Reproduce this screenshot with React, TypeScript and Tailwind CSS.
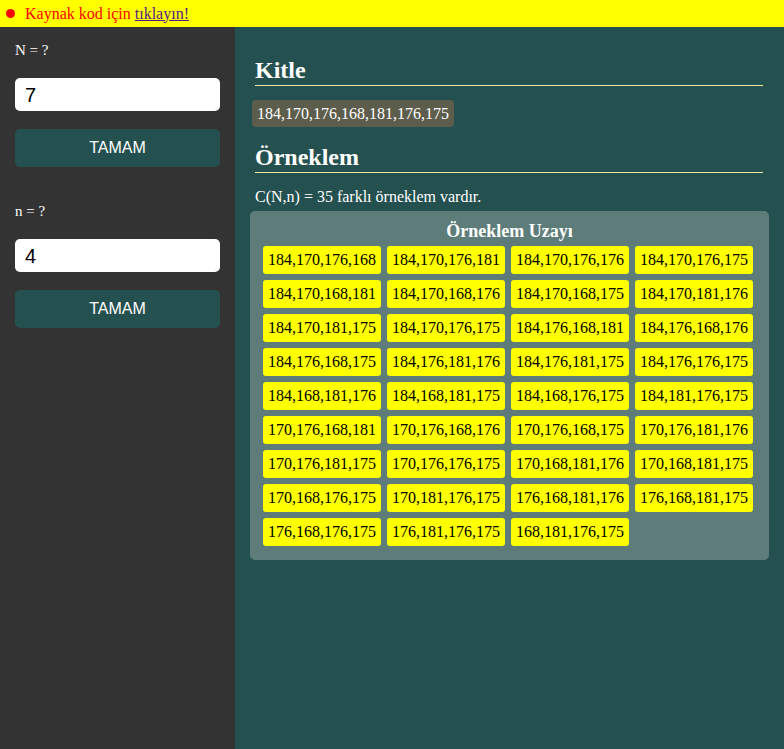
import React from "react";

const combos = [
  "184,170,176,168","184,170,176,181","184,170,176,176","184,170,176,175",
  "184,170,168,181","184,170,168,176","184,170,168,175","184,170,181,176",
  "184,170,181,175","184,170,176,175","184,176,168,181","184,176,168,176",
  "184,176,168,175","184,176,181,176","184,176,181,175","184,176,176,175",
  "184,168,181,176","184,168,181,175","184,168,176,175","184,181,176,175",
  "170,176,168,181","170,176,168,176","170,176,168,175","170,176,181,176",
  "170,176,181,175","170,176,176,175","170,168,181,176","170,168,181,175",
  "170,168,176,175","170,181,176,175","176,168,181,176","176,168,181,175",
  "176,168,176,175","176,181,176,175","168,181,176,175",
];

const serif = { fontFamily: '"Liberation Serif", "Times New Roman", serif' };
const sans = { fontFamily: '"Liberation Sans", Arial, sans-serif' };

function Field({ label, value }: { label: string; value: string }) {
  return (
    <div className="flex flex-col">
      <div className="text-[15px] text-white leading-[20px] h-[20px]" style={serif}>{label}</div>
      <div className="mt-[18px] h-[33px] w-[205px] rounded-[5px] bg-white flex items-center pl-[10px] text-[20px] text-black" style={sans}>{value}</div>
      <div className="mt-[18px] h-[38px] w-[205px] rounded-[5px] bg-[#245050] flex items-center justify-center text-[16px] text-white" style={sans}>TAMAM</div>
    </div>
  );
}

export default function App() {
  return (
    <div className="w-[784px] h-[749px] flex flex-col overflow-hidden" style={serif}>
      <div className="h-[27px] bg-[#ffff00] flex items-center pl-[6px] shrink-0">
        <span className="w-[9px] h-[9px] rounded-full bg-[#ff0000] inline-block" />
        <span className="ml-[10px] text-[16px] text-[#ff0000]">Kaynak kod için </span>
        <span className="ml-[4px] text-[16px] text-[#551a8b] underline">tıklayın!</span>
      </div>
      <div className="flex flex-1">
        <div className="w-[235px] shrink-0 bg-[#333333] pl-[15px] pt-[13px] flex flex-col gap-[34px]">
          <Field label="N = ?" value="7" />
          <Field label="n = ?" value="4" />
        </div>
        <div className="flex-1 min-w-0 bg-[#245050] pl-[20px] pr-[21px] pt-[29px]">
          <div className="text-[24px] font-bold text-white leading-[28px] border-b border-[#f5e3a8] pb-[1px]">Kitle</div>
          <div className="mt-[14px] inline-block bg-[#5c5d4c] rounded-[4px] px-[5px] py-[3px] text-[16px] text-white leading-[21px] -ml-[3px]">
            184,170,176,168,181,176,175
          </div>
          <div className="mt-[16px] text-[24px] font-bold text-white leading-[28px] border-b border-[#f5e3a8] pb-[1px]">Örneklem</div>
          <div className="mt-[14px] text-[16px] text-white leading-[20px]">C(N,n) = 35 farklı örneklem vardır.</div>
          <div className="mt-[4px] -ml-[5px] -mr-[6px] bg-[#5e7d7a] rounded-[5px] pb-[14px]">
            <div className="text-center text-[18px] font-bold text-white pt-[9px] leading-[22px]">Örneklem Uzayı</div>
            <div className="flex flex-wrap gap-[6px] pl-[13px] mt-[4px]">
              {combos.map((c, i) => (
                <div key={i} className="w-[118px] h-[28px] bg-[#ffff00] rounded-[3px] flex items-center justify-center text-[16px] text-black">
                  {c}
                </div>
              ))}
            </div>
          </div>
        </div>
      </div>
    </div>
  );
}
